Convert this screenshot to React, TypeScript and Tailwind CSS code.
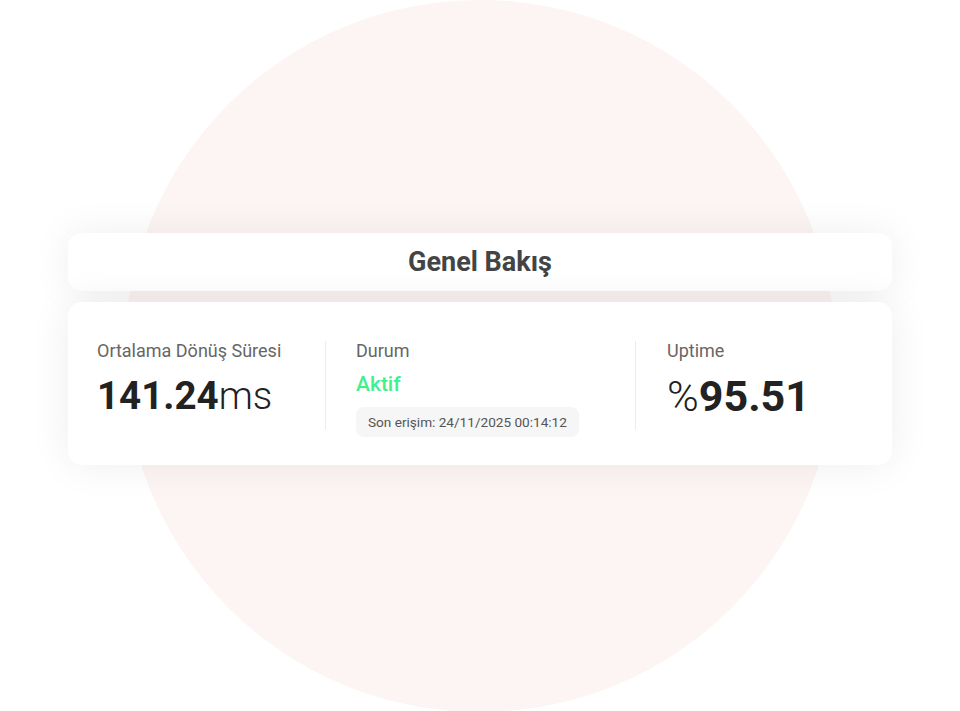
import React from 'react';

const font = { fontFamily: 'Roboto, "Noto Sans", sans-serif' };

export default function App() {
  return (
    <div className="relative w-full h-[711px] overflow-hidden bg-white" style={font}>
      {/* background circle */}
      <div className="absolute left-[124px] top-0 w-[712px] h-[712px] rounded-full bg-[#fdf5f3]" />

      <div className="relative px-[68px] pt-[233px] flex flex-col gap-[11px]">
        {/* Header */}
        <div className="h-[58px] rounded-[14px] bg-white shadow-[0_0_40px_rgba(0,0,0,0.07)] flex items-center justify-center">
          <h1 className="text-[27px] font-bold text-[#444444] leading-none">Genel Bakış</h1>
        </div>

        {/* Stats */}
        <div className="rounded-[14px] bg-white shadow-[0_0_40px_rgba(0,0,0,0.07)] pl-[29px] pt-[37px] pb-[28px] flex items-start">
          <div className="w-[228px] flex flex-col">
            <p className="text-[18px] leading-[24px] text-[#666666]">Ortalama Dönüş Süresi</p>
            <p className="mt-[10px] text-[38.5px] leading-[46px] text-[#222222]">
              <span className="font-bold">141.24</span>
              <span className="font-light">ms</span>
            </p>
          </div>

          <div className="mt-[2px] h-[89px] w-px bg-[#ececec]" />

          <div className="w-[309px] pl-[30px] flex flex-col items-start">
            <p className="text-[18px] leading-[24px] text-[#666666]">Durum</p>
            <p className="mt-[7px] text-[21px] leading-[28px] font-medium text-[#3ef08e]">Aktif</p>
            <div className="mt-[9px] h-[30px] px-[12px] rounded-[8px] bg-[#f6f6f6] flex items-center">
              <span className="text-[13.6px] text-[#555555]">Son erişim: 24/11/2025 00:14:12</span>
            </div>
          </div>

          <div className="mt-[2px] h-[89px] w-px bg-[#ececec]" />

          <div className="pl-[31px] flex flex-col">
            <p className="text-[18px] leading-[24px] text-[#666666]">Uptime</p>
            <p className="mt-[7px] text-[43px] leading-[52px] text-[#222222]">
              <span className="font-light">%</span>
              <span className="font-bold">95.51</span>
            </p>
          </div>
        </div>
      </div>
    </div>
  );
}
